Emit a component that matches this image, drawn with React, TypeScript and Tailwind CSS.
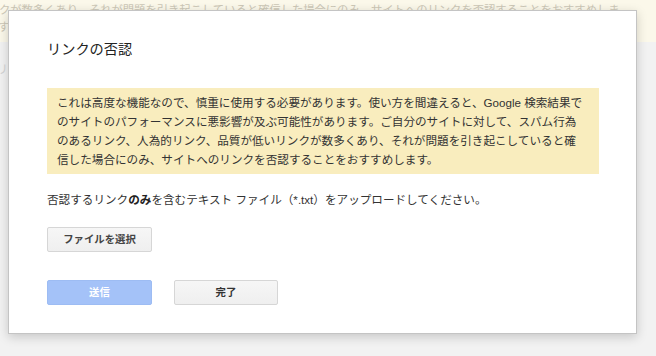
import React from "react";

const FONT = { fontFamily: '"Liberation Sans", Arial, "Noto Sans CJK JP", sans-serif' };

export default function App() {
  return (
    <div className="relative w-[656px] h-[356px] overflow-hidden bg-[#f2f2f2]" style={FONT}>
      {/* faded page behind the dialog */}
      <div className="h-[42px] bg-[#fbf8ea] text-[#ccc7b6] text-[11.3px] leading-[17px] pt-[2px] overflow-hidden">
        <div className="whitespace-nowrap -ml-[1px]">
          クが数多くあり、それが問題を引き起こしていると確信した場合にのみ、サイトへのリンクを否認することをおすすめしま
        </div>
        <div className="whitespace-nowrap -ml-[2px]">す。</div>
      </div>
      <div className="pt-[19px] text-[#d4d4d4] text-[12px] whitespace-nowrap -ml-[4px]">リンクの否認</div>

      {/* dialog */}
      <div className="absolute left-[8px] top-[10px] w-[629px] h-[324px] bg-white border border-[#c4c4c4] shadow-[0_3px_10px_rgba(0,0,0,0.18)] pl-[38px] pr-[37px] pt-[28px]">
        <h1 className="text-[14.2px] leading-[20px] text-[#222] font-normal">リンクの否認</h1>
        <div className="mt-[29px] bg-[#f9edbe] px-[10px] py-[5px] text-[11.6px] leading-[19px] text-[#333]">
          これは高度な機能なので、慎重に使用する必要があります。使い方を間違えると、Google 検索結果で
          <br />
          のサイトのパフォーマンスに悪影響が及ぶ可能性があります。ご自分のサイトに対して、スパム行為
          <br />
          のあるリンク、人為的リンク、品質が低いリンクが数多くあり、それが問題を引き起こしていると確
          <br />
          信した場合にのみ、サイトへのリンクを否認することをおすすめします。
        </div>
        <p className="mt-[16px] text-[11.6px] leading-[19px] text-[#333] whitespace-nowrap">
          否認するリンク<b className="font-bold text-[#222]">のみ</b>を含むテキスト ファイル（*.txt）をアップロードしてください。
        </p>
        <button className="mt-[18px] w-[105px] h-[25px] rounded-[2px] border border-[#d6d6d6] bg-gradient-to-b from-[#f6f6f6] to-[#efefef] text-[10.4px] font-bold text-[#444] flex items-center justify-center">
          ファイルを選択
        </button>
        <div className="mt-[28px] flex gap-[22px]">
          <button className="w-[105px] h-[25px] rounded-[2px] border border-[#9dbcf3] bg-[#a4c2f8] text-[10.4px] font-bold text-white flex items-center justify-center">
            送信
          </button>
          <button className="w-[104px] h-[25px] rounded-[2px] border border-[#d6d6d6] bg-gradient-to-b from-[#f6f6f6] to-[#efefef] text-[10.4px] font-bold text-[#333] flex items-center justify-center">
            完了
          </button>
        </div>
      </div>
    </div>
  );
}
